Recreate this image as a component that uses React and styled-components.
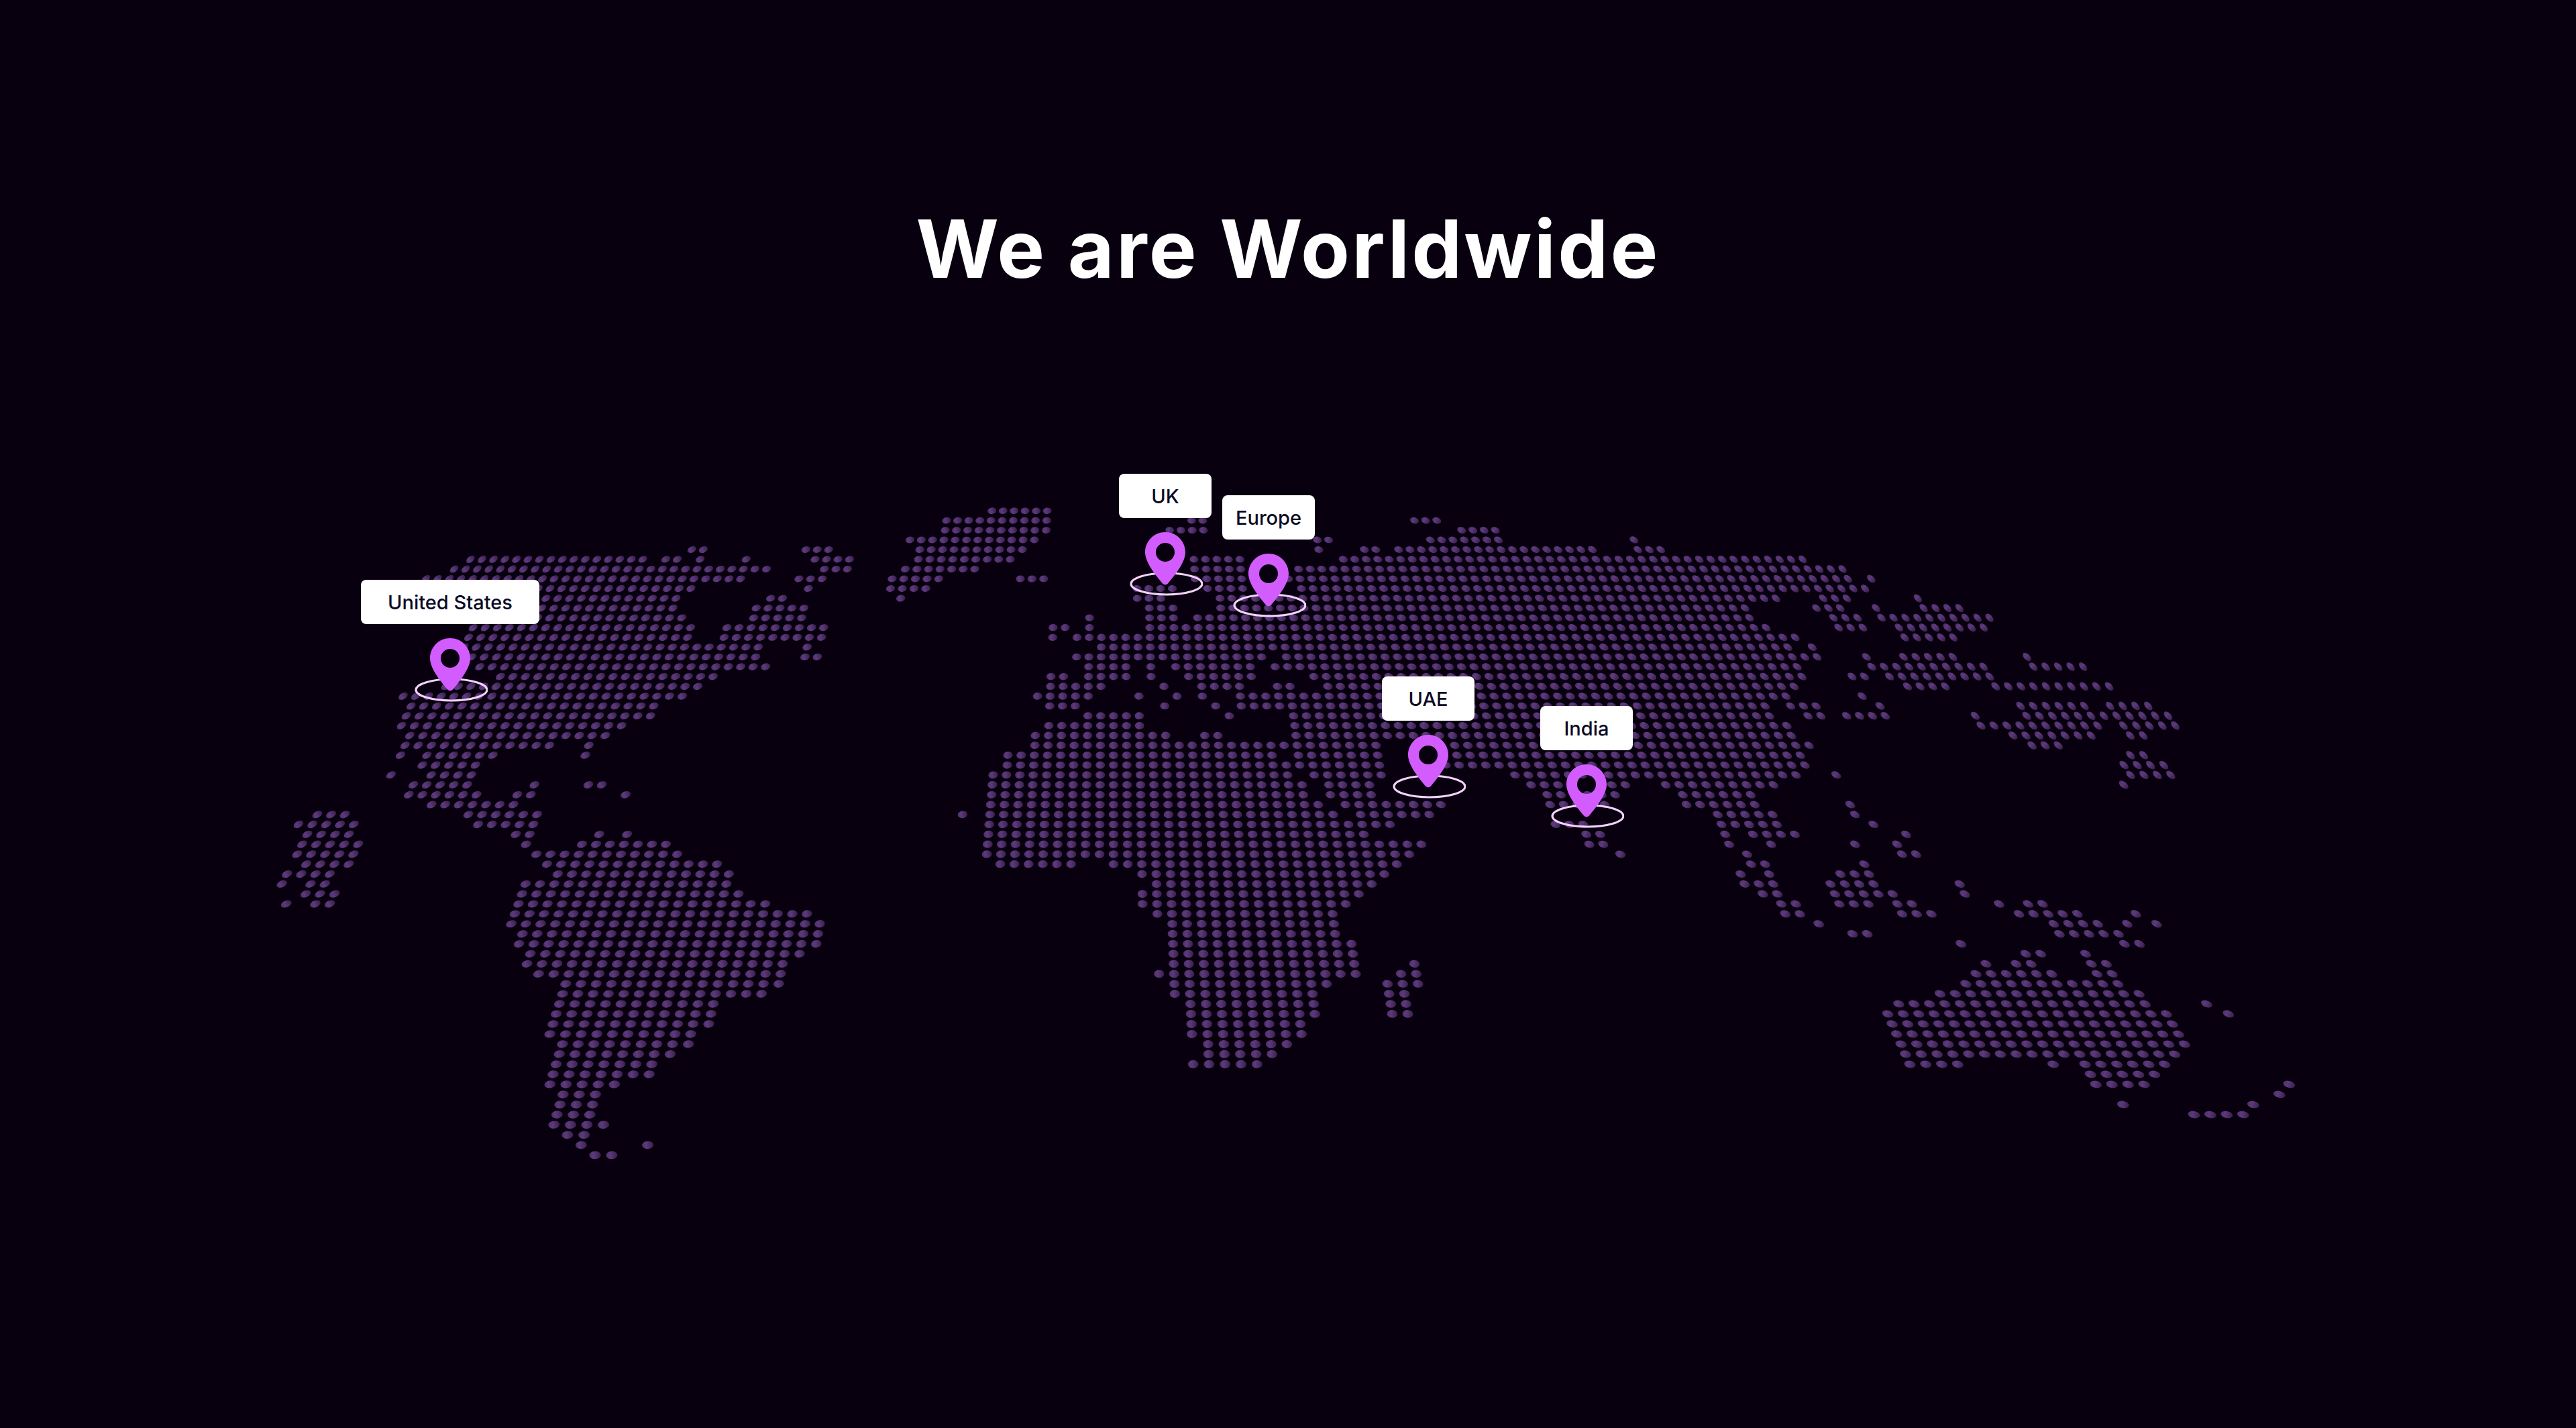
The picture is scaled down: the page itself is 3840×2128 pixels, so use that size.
import React, { useMemo } from 'react';
import styled, { createGlobalStyle } from 'styled-components';

const GlobalStyle = createGlobalStyle`
  html, body { margin: 0; padding: 0; background: #08000e; }
`;

const Page = styled.main`
  width: 3840px;
  height: 2128px;
  background: #08000e;
  overflow: hidden;
  display: flex;
  flex-direction: column;
  align-items: center;
  padding-top: 296px;
  box-sizing: border-box;
`;

const Title = styled.h1`
  margin: 0;
  font-family: Inter, "Open Sans", sans-serif;
  font-weight: 700;
  font-size: 119px;
  line-height: 150px;
  letter-spacing: 3.2px;
  color: #ffffff;
`;

const MapCanvas = styled.section`
  position: relative;
  width: 3840px;
  flex: 1;
`;

const DotField = styled.svg`
  position: absolute;
  left: 0;
  top: 0;
  display: block;
`;

const Marker = styled.div`
  position: absolute;
  left: ${(p) => p.$x}px;
  top: ${(p) => p.$y}px;
  width: 0;
  display: flex;
  flex-direction: column;
  align-items: center;
  gap: 21px;
`;

const Label = styled.div`
  flex: none;
  width: ${(p) => p.$w}px;
  height: 66px;
  display: flex;
  align-items: center;
  justify-content: center;
  background: #ffffff;
  border-radius: 8px;
  font-family: Inter, "Open Sans", sans-serif;
  font-weight: 500;
  font-size: 29px;
  color: #0b0b24;
`;

const PinIcon = styled.svg`
  flex: none;
  display: block;
`;

const REGIONS = [
  { x0: 400, y0: 800, sx: 1.3067, sy: 1.6333, rows: [
    [8, 1260, 1490], [32, 815, 838, 1037, 1082, 1260, 1465],
    [55, 395, 585, 620, 720, 785, 805, 850, 850, 940, 940, 1075, 1125, 1255, 1440],
    [79, 360, 945, 980, 980, 1090, 1120, 1230, 1370],
    [103, 305, 910, 1040, 1090, 1225, 1295, 1455, 1505],
    [127, 300, 830, 1060, 1060, 1220, 1270], [151, 300, 800, 980, 1010, 1240, 1240],
    [175, 300, 795, 950, 1050], [197, 330, 810, 945, 1040], [220, 400, 825, 890, 1090],
    [243, 400, 820, 885, 1080], [268, 390, 960, 1050, 1050], [292, 405, 950, 1040, 1070],
    [316, 415, 965], [340, 440, 860], [364, 340, 830], [387, 260, 800], [411, 270, 745],
    [436, 260, 735], [458, 255, 695], [482, 270, 665], [506, 255, 550, 625, 625],
    [530, 245, 245, 300, 435, 620, 620], [553, 290, 400], [577, 250, 250, 305, 390],
    [600, 295, 380, 510, 510, 622, 648], [624, 285, 400, 475, 500, 692, 692],
    [648, 330, 470], [672, 90, 140, 400, 515], [696, 55, 155, 420, 510],
    [720, 68, 170, 470, 500, 635, 635, 695, 695], [744, 55, 185, 490, 490, 600, 770],
    [767, 45, 175, 510, 795], [790, 62, 165, 555, 875], [814, 48, 130, 555, 895],
    [838, 38, 38, 90, 120, 510, 890], [861, 82, 135, 500, 910], [885, 45, 45, 98, 125, 495, 965],
    [909, 485, 1045], [933, 478, 1075], [957, 498, 1070], [981, 490, 1065], [1004, 515, 1030],
    [1028, 505, 995], [1052, 530, 990], [1075, 585, 985], [1100, 575, 980], [1124, 568, 975],
    [1147, 560, 880], [1171, 552, 875], [1195, 545, 865], [1219, 540, 830], [1243, 565, 825],
    [1267, 555, 785], [1291, 550, 745], [1315, 542, 740], [1338, 535, 670], [1360, 560, 630],
    [1385, 555, 625], [1408, 547, 620], [1432, 542, 645], [1455, 570, 605], [1478, 597, 597, 733, 733],
    [1505, 625, 660],
  ] },
  { x0: 1400, y0: 720, sx: 1.3067, sy: 1.7422, rows: [
    [72, 100, 208], [97, 10, 205, 485, 510, 925, 970], [122, 5, 205, 440, 515, 1020, 1085],
    [148, 0, 180, 735, 760, 955, 1090, 1355, 1355], [173, 0, 155, 735, 735, 825, 850, 895, 1275, 1365, 1410],
    [198, 15, 130, 490, 590, 785, 1568], [224, 15, 65, 490, 590, 700, 1568],
    [250, 150, 195, 490, 590, 690, 1568], [275, 380, 460, 530, 590, 700, 1568],
    [301, 375, 440, 540, 1568], [327, 420, 450, 540, 1568], [351, 283, 283, 400, 450, 515, 1568],
    [376, 230, 255, 300, 300, 400, 1568], [401, 230, 230, 275, 305, 350, 1568], [426, 325, 1568],
    [452, 275, 620, 665, 1568], [477, 295, 370, 420, 420, 470, 600, 645, 645, 690, 1568],
    [503, 220, 250, 295, 375, 422, 422, 495, 605, 720, 1568],
    [528, 220, 325, 445, 445, 520, 595, 650, 680, 745, 1568],
    [553, 195, 295, 395, 395, 470, 470, 522, 522, 595, 1568],
    [579, 215, 270, 445, 445, 548, 548, 600, 680, 720, 1568],
    [604, 290, 395, 575, 575, 700, 1568], [630, 212, 395, 705, 1568],
    [656, 185, 450, 525, 555, 705, 1568], [681, 180, 450, 470, 680, 710, 845, 1000, 1568],
    [706, 128, 660, 710, 850, 1010, 1568], [732, 125, 690, 735, 870, 1000, 1300, 1330, 1568],
    [757, 95, 690, 740, 860, 1115, 1240, 1330, 1568], [782, 95, 720, 770, 850, 1145, 1200, 1340, 1340, 1420, 1568],
    [808, 90, 720, 775, 850, 1180, 1310, 1450, 1568], [833, 90, 750, 800, 970, 1190, 1290, 1455, 1540],
    [858, 55, 55, 90, 755, 830, 945, 1525, 1560], [884, 85, 865, 1210, 1250, 1530, 1560],
    [909, 85, 815, 1255, 1285, 1535, 1535], [934, 105, 935, 1262, 1290, 1545, 1545],
    [959, 105, 905, 1325, 1325], [985, 130, 250, 330, 905], [1010, 385, 880], [1036, 415, 850],
    [1062, 385, 825], [1088, 385, 800], [1113, 415, 775], [1140, 445, 775], [1165, 445, 775],
    [1192, 445, 810], [1217, 445, 815], [1243, 445, 815, 935, 935], [1268, 418, 418, 445, 815, 905, 935],
    [1293, 445, 755, 878, 940], [1319, 445, 730, 880, 915], [1345, 478, 730, 885, 915],
    [1370, 478, 730, 885, 920], [1396, 478, 705], [1421, 478, 705], [1446, 510, 670],
    [1472, 510, 640], [1497, 510, 610],
  ] },
  { x0: 2400, y0: 760, sx: 1.4933, sy: 1.6333, rows: [
    [68, 55, 55], [97, 65, 120], [120, 0, 440], [145, 0, 530], [169, 0, 520, 590, 590],
    [193, 0, 580], [217, 0, 380, 485, 540], [224, 672, 672], [241, 0, 290, 470, 500],
    [250, 585, 585, 685, 785], [265, 0, 300, 510, 540], [273, 600, 835], [289, 0, 355, 520, 550], [295, 645, 845],
    [313, 0, 420], [321, 650, 760], [337, 0, 405, 460, 460], [353, 565, 565, 665, 765],
    [361, 0, 470], [380, 578, 820], [385, 0, 430], [397, 755, 850], [409, 0, 440, 525, 555, 625, 725],
    [368, 935, 935], [393, 948, 1050], [418, 860, 1095], [433, 0, 420, 670, 740], [440, 908, 1110],
    [457, 0, 355, 400, 400, 575, 575], [466, 913, 1035, 1070, 1070, 1105, 1105],
    [481, 60, 355, 415, 445, 590, 590], [487, 1140, 1210], [497, 925, 1060], [505, 70, 365, 450, 480, 540, 600, 825, 825, 1110, 1255],
    [529, 55, 380, 840, 1085, 1135, 1265], [553, 55, 415, 885, 1085, 1145, 1180],
    [577, 60, 450, 930, 1000], [591, 1150, 1185], [602, 0, 435], [615, 1130, 1235],
    [626, 0, 445], [638, 1145, 1245], [650, 0, 425, 495, 495], [664, 1158, 1158], [673, 0, 35, 125, 375],
    [697, 0, 10, 165, 290], [720, 175, 335, 548, 548], [745, 245, 370, 560, 560],
    [770, 250, 385, 600, 600], [793, 260, 260, 330, 425, 645, 645], [817, 270, 270, 370, 370, 560, 560, 630, 630],
    [841, 20, 20, 310, 310, 665, 695], [865, 320, 355, 580, 580], [889, 295, 295, 365, 365, 525, 590],
    [913, 305, 305, 340, 370, 505, 600, 765, 765], [937, 345, 380, 515, 610, 645, 645, 775, 775],
    [960, 390, 420, 520, 590, 655, 685, 860, 860, 925, 960], [984, 400, 430, 665, 700, 900, 1035, 1175, 1175],
    [1010, 475, 475, 985, 1085, 1150, 1150, 1215, 1215], [1030, 550, 585, 995, 1130],
    [1057, 770, 770, 1150, 1180], [1080, 915, 950, 1060, 1060], [1104, 825, 825, 895, 930, 1070, 1105],
    [1129, 800, 975, 1085, 1120], [1153, 780, 1130], [1177, 718, 1180], [1201, 658, 1195, 1320, 1320],
    [1222, 630, 1240, 1360, 1360], [1247, 640, 1255], [1272, 650, 1270], [1296, 660, 1285],
    [1320, 670, 1260], [1344, 680, 765, 975, 975, 1050, 1240], [1370, 1062, 1215], [1394, 1075, 1190, 1500, 1500],
    [1418, 1480, 1480], [1439, 1135, 1135, 1425, 1425], [1460, 1367, 1400], [1483, 1315, 1345],
  ] },
];

const CX = 1660;
const rowY = (i) => 1110.7 + 14.686 * i + 0.00508 * i * i;
const stepAt = (y) => 17 + 0.0088 * (y - 820);

function buildDots() {
  const seen = new Map();
  REGIONS.forEach(({ x0, y0, sx, sy, rows }) => {
    rows.forEach(([zy, ...spans]) => {
      const ry = y0 + zy / sy;
      let i = Math.round((ry - 1110.7) / 14.8);
      let best = Infinity;
      for (let j = i - 3; j <= i + 3; j++) {
        const d = Math.abs(rowY(j) - ry);
        if (d < best) { best = d; i = j; }
      }
      const y = rowY(i);
      const step = stepAt(y);
      for (let s = 0; s < spans.length; s += 2) {
        const a = Math.round((x0 + spans[s] / sx - CX) / step);
        const b = Math.round((x0 + spans[s + 1] / sx - CX) / step);
        for (let k = a; k <= b; k++) seen.set(`${i}:${k}`, { x: CX + k * step, y });
      }
    });
  });
  return [...seen.values()];
}

function dotShape(x, y) {
  const off = (x - CX) / 1400;
  const depth = (y - 760) / 960;
  const rx = 6.4 + 1.6 * depth + Math.abs(off);
  const ry = 4.9 + 1.5 * depth - Math.abs(off);
  const angle = off * (58 - 52 * depth);
  return { rx, ry, angle };
}

const MARKERS = [
  { name: 'United States', x: 671, y: 418, w: 266 },
  { name: 'UK', x: 1737, y: 260, w: 138 },
  { name: 'Europe', x: 1891, y: 292, w: 138 },
  { name: 'UAE', x: 2129, y: 562, w: 138 },
  { name: 'India', x: 2365, y: 606, w: 138 },
];

function Pin() {
  return (
    <PinIcon width="112" height="97" viewBox="0 0 112 97" fill="none">
      <ellipse cx="58" cy="77" rx="53" ry="16" stroke="#f3d2ff" strokeWidth="3.2" />
      <path
        fill="#d35cff"
        fillRule="evenodd"
        d="M56 0C39.4 0 26 13.4 26 30c0 15.5 16.500 35 26 46.5 2.200 2.400 5.800 2.400 8 0C69.500 65 86 45.500 86 30 86 13.400 72.600 0 56 0zM56 16a14 14 0 1 1 0 28 14 14 0 0 1 0-28z"
      />
    </PinIcon>
  );
}

export default function App() {
  const dots = useMemo(buildDots, []);
  return (
    <Page>
      <GlobalStyle />
      <Title>We are Worldwide</Title>
      <MapCanvas>
        <DotField width="3840" height="1682" viewBox="0 446 3840 1682">
          <defs>
            <linearGradient id="dot" x1="0" y1="0" x2="1" y2="0">
              <stop offset="0" stopColor="#4d2f68" />
              <stop offset="0.35" stopColor="#5e3a7e" />
              <stop offset="1" stopColor="#38204c" />
            </linearGradient>
          </defs>
          {dots.map((d, n) => {
            const { rx, ry, angle } = dotShape(d.x, d.y);
            return (
              <ellipse
                key={n}
                cx={d.x.toFixed(1)}
                cy={d.y.toFixed(1)}
                rx={rx.toFixed(1)}
                ry={ry.toFixed(1)}
                fill="url(#dot)"
                transform={`rotate(${angle.toFixed(1)} ${d.x.toFixed(1)} ${d.y.toFixed(1)})`}
              />
            );
          })}
        </DotField>
        {MARKERS.map((m) => (
          <Marker key={m.name} $x={m.x} $y={m.y}>
            <Label $w={m.w}>{m.name}</Label>
            <Pin />
          </Marker>
        ))}
      </MapCanvas>
    </Page>
  );
}
